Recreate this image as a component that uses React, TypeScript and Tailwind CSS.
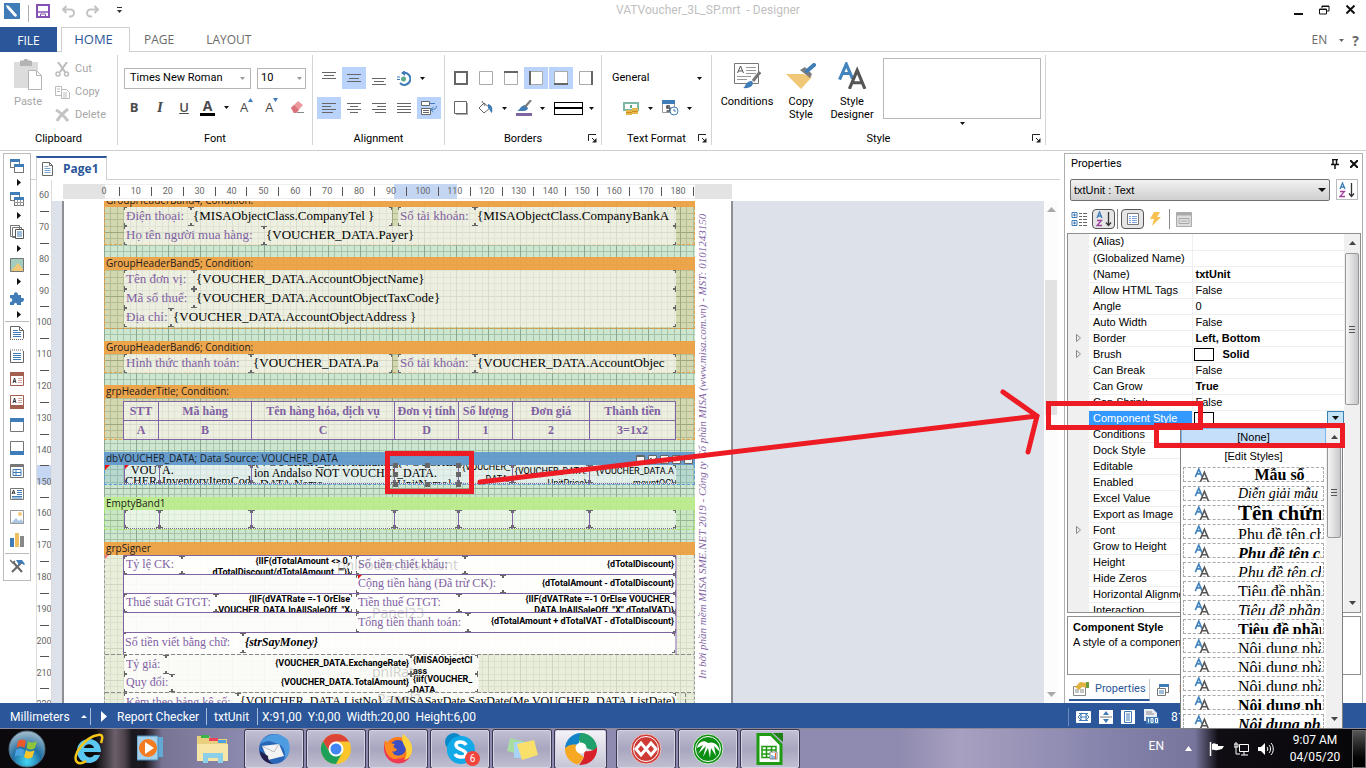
import type { ReactNode } from "react";

const UI = "font-['Roboto','Open_Sans',sans-serif]";

type Box = {
    x: number;
    y: number;
    w: number;
    h: number;
    lines?: string[];
    kind?: "label" | "note" | "value" | "cell" | "small" | "bold" | "signature" | "head";
    align?: "left" | "right" | "center";
    top?: boolean;
    edge?: boolean;
};

const kinds = {
    label: "text-[13px] leading-[14px] text-[#7f5fa3] font-['Liberation_Serif',serif]",
    note: "text-[12px] leading-[14px] text-[#7f5fa3] font-['Liberation_Serif',serif]",
    value: "text-[13px] leading-[13px] text-black font-['Liberation_Serif',serif]",
    cell: "text-[12px] leading-[11px] text-black font-['Liberation_Serif',serif]",
    small: "text-[9px] leading-[12px] text-black font-['Roboto','Liberation_Sans',sans-serif]",
    bold: "text-[9px] leading-[11px] font-bold text-black font-['Roboto','Liberation_Sans',sans-serif]",
    signature: "text-[12px] leading-[14px] font-bold italic text-black font-['Liberation_Serif',serif]",
    head: "text-[12px] leading-[14px] font-bold text-[#7f5fa3] font-['Liberation_Serif',serif]",
};

const aligns = {
    left: "items-start",
    right: "items-end",
    center: "items-center",
};

const band4: Box[] = [
    { x: 19, y: 0, w: 67, h: 19, lines: ["Điện thoại:"], kind: "label" },
    { x: 86, y: 0, w: 201, h: 19, lines: ["{MISAObjectClass.CompanyTel }"] },
    { x: 293, y: 0, w: 77, h: 19, lines: ["Số tài khoản:"], kind: "label" },
    { x: 370, y: 0, w: 201, h: 19, lines: ["{MISAObjectClass.CompanyBankA"] },
    { x: 19, y: 19, w: 140, h: 19, lines: ["Họ tên người mua hàng:"], kind: "label" },
    { x: 159, y: 19, w: 412, h: 19, lines: ["{VOUCHER_DATA.Payer}"] },
];

const band5: Box[] = [
    { x: 19, y: 0, w: 70, h: 19, lines: ["Tên đơn vị:"], kind: "label" },
    { x: 89, y: 0, w: 482, h: 19, lines: ["{VOUCHER_DATA.AccountObjectName}"] },
    { x: 19, y: 19, w: 70, h: 19, lines: ["Mã số thuế:"], kind: "label" },
    { x: 89, y: 19, w: 482, h: 19, lines: ["{VOUCHER_DATA.AccountObjectTaxCode}"] },
    { x: 19, y: 38, w: 47, h: 19, lines: ["Địa chỉ:"], kind: "label" },
    { x: 66, y: 38, w: 505, h: 19, lines: ["{VOUCHER_DATA.AccountObjectAddress }"] },
];

const band6: Box[] = [
    { x: 19, y: 0, w: 127, h: 19, lines: ["Hình thức thanh toán:"], kind: "label" },
    { x: 146, y: 0, w: 141, h: 19, lines: ["{VOUCHER_DATA.Pa"] },
    { x: 293, y: 0, w: 77, h: 19, lines: ["Số tài khoản:"], kind: "label" },
    { x: 370, y: 0, w: 201, h: 19, lines: ["{VOUCHER_DATA.AccountObjec"] },
];

const dataBand: Box[] = [
    { x: 19, y: 0, w: 35, h: 19, lines: ["VOU", "CHER"], kind: "cell", align: "right", top: true, edge: true },
    { x: 54, y: 0, w: 92, h: 19, lines: ["A.", "InventoryItemCode"], kind: "cell", top: true, edge: true },
    { x: 146, y: 0, w: 143, h: 19, lines: ["{VOUCHER_DATA.Enumerat", "ion Andalso NOT VOUCHER", "_DATA.Name"], kind: "cell", edge: true },
    { x: 289, y: 0, w: 64, h: 19, lines: ["{VOUCHER", "_DATA.", "UnitName}"], kind: "cell", edge: true },
    { x: 353, y: 0, w: 54, h: 19, lines: ["{VOUCHER_", "DATA."], kind: "small", align: "right", edge: true },
    { x: 407, y: 0, w: 77, h: 19, lines: ["{VOUCHER_DATA.", "UnitPrice}"], kind: "small", align: "right", top: true, edge: true },
    { x: 484, y: 0, w: 87, h: 19, lines: ["{VOUCHER_DATA.A", "mountOC}"], kind: "small", align: "right", top: true, edge: true },
];

const emptyBand: Box[] = [
    { x: 19, y: 0, w: 35, h: 19, edge: true },
    { x: 54, y: 0, w: 92, h: 19, edge: true },
    { x: 146, y: 0, w: 143, h: 19, edge: true },
    { x: 289, y: 0, w: 64, h: 19, edge: true },
    { x: 353, y: 0, w: 54, h: 19, edge: true },
    { x: 407, y: 0, w: 77, h: 19, edge: true },
    { x: 484, y: 0, w: 87, h: 19, edge: true },
];

const signer: Box[] = [
    { x: 19, y: 1, w: 58, h: 18, lines: ["Tỷ lệ CK:"], kind: "note" },
    { x: 77, y: 1, w: 170, h: 18, lines: ["{IIF(dTotalAmount <> 0,", "dTotalDiscount/dTotalAmount, \"\")}"], kind: "bold", align: "right", top: true },
    { x: 251, y: 1, w: 109, h: 18, lines: ["Số tiền chiết khấu:"], kind: "note" },
    { x: 360, y: 1, w: 211, h: 18, lines: ["{dTotalDiscount}"], kind: "bold", align: "right" },
    { x: 251, y: 20, w: 147, h: 18, lines: ["Cộng tiền hàng (Đã trừ CK):"], kind: "note" },
    { x: 398, y: 20, w: 173, h: 18, lines: ["{dTotalAmount - dTotalDiscount}"], kind: "bold", align: "right" },
    { x: 19, y: 39, w: 92, h: 18, lines: ["Thuế suất GTGT:"], kind: "note" },
    { x: 111, y: 39, w: 136, h: 18, lines: ["{IIF(dVATRate =-1 OrElse", "VOUCHER_DATA.InAllSaleOff, \"X"], kind: "bold", align: "right", top: true },
    { x: 251, y: 39, w: 103, h: 18, lines: ["Tiền thuế GTGT:"], kind: "note" },
    { x: 354, y: 39, w: 217, h: 18, lines: ["{IIF(dVATRate =-1 OrElse VOUCHER_", "DATA.InAllSaleOff, \"X\",dTotalVAT)}"], kind: "bold", align: "right", top: true },
    { x: 251, y: 58, w: 112, h: 19, lines: ["Tổng tiền thanh toán:"], kind: "note" },
    { x: 363, y: 58, w: 208, h: 19, lines: ["{dTotalAmount + dTotalVAT - dTotalDiscount}"], kind: "bold", align: "right" },
    { x: 18, y: 78, w: 120, h: 20, lines: ["Số tiền viết bằng chữ:"], kind: "note" },
    { x: 138, y: 78, w: 432, h: 20, lines: ["{strSayMoney}"], kind: "signature" },
    { x: 19, y: 100, w: 42, h: 19, lines: ["Tỷ giá:"], kind: "note" },
    { x: 61, y: 100, w: 245, h: 19, lines: ["{VOUCHER_DATA.ExchangeRate}"], kind: "bold", align: "right" },
    { x: 306, y: 100, w: 67, h: 19, lines: ["{MISAObjectCl", "ass"], kind: "bold", top: true },
    { x: 19, y: 119, w: 48, h: 18, lines: ["Quy đổi:"], kind: "note" },
    { x: 67, y: 119, w: 239, h: 18, lines: ["{VOUCHER_DATA.TotalAmount}"], kind: "bold", align: "right" },
    { x: 306, y: 119, w: 67, h: 18, lines: ["{iif(VOUCHER_", "DATA."], kind: "bold", top: true },
    { x: 19, y: 138, w: 114, h: 19, lines: ["Kèm theo bảng kê số:"], kind: "note" },
    { x: 133, y: 138, w: 438, h: 19, lines: ["{VOUCHER_DATA.ListNo}, {MISASayDate.SayDate(Me.VOUCHER_DATA.ListDate)}"], kind: "cell" },
];

const ghosts = [
    { x: 232, y: 2, text: "pnlFooterDiscount" },
    { x: 267, y: 50, text: "Panel23" },
    { x: 267, y: 109, text: "pnlRate" },
    { x: 272, y: 136, text: "Panel2" },
];

const props: { name: string; value?: string; bold?: boolean; swatch?: boolean; expand?: boolean }[] = [
    { name: "(Alias)" },
    { name: "(Globalized Name)" },
    { name: "(Name)", value: "txtUnit", bold: true },
    { name: "Allow HTML Tags", value: "False" },
    { name: "Angle", value: "0" },
    { name: "Auto Width", value: "False" },
    { name: "Border", value: "Left, Bottom", bold: true, expand: true },
    { name: "Brush", value: "Solid", bold: true, swatch: true, expand: true },
    { name: "Can Break", value: "False" },
    { name: "Can Grow", value: "True", bold: true },
    { name: "Can Shrink", value: "False" },
    { name: "Component Style", value: "", swatch: true },
    { name: "Conditions" },
    { name: "Dock Style" },
    { name: "Editable" },
    { name: "Enabled" },
    { name: "Excel Value" },
    { name: "Export as Image" },
    { name: "Font", expand: true },
    { name: "Grow to Height" },
    { name: "Height" },
    { name: "Hide Zeros" },
    { name: "Horizontal Alignment" },
    { name: "Interaction" },
];

const styleItems = [
    { text: "Mẫu số", cls: "text-[16px] leading-[14px] font-bold text-center" },
    { text: "Diễn giải mẫu số", cls: "text-[14px] leading-[14px] italic" },
    { text: "Tên chứng từ", cls: "text-[21px] leading-[14px] font-bold" },
    { text: "Phụ đề tên chứng", cls: "text-[16px] leading-[20px]" },
    { text: "Phụ đề tên ch", cls: "text-[16px] leading-[20px] font-bold italic" },
    { text: "Phụ đề tên chứng", cls: "text-[16px] leading-[20px] italic" },
    { text: "Tiêu đề phần", cls: "text-[16px] leading-[20px]" },
    { text: "Tiêu đề phần", cls: "text-[16px] leading-[20px] italic" },
    { text: "Tiêu đề phần", cls: "text-[16px] leading-[20px] font-bold" },
    { text: "Nội dung phần", cls: "text-[16px] leading-[20px]" },
    { text: "Nội dung phần", cls: "text-[16px] leading-[20px]" },
    { text: "Nội dung phần", cls: "text-[16px] leading-[20px]" },
    { text: "Nội dung phần", cls: "text-[16px] leading-[20px] font-bold" },
    { text: "Nội dung phần", cls: "text-[16px] leading-[20px] font-bold italic" },
];

function Svg({ w = 16, h = 16, box, children }: { w?: number; h?: number; box?: string; children: ReactNode }) {
    return (
        <svg width={w} height={h} viewBox={box ?? `0 0 ${w} ${h}`} fill="none" aria-hidden="true" className="shrink-0">
            {children}
        </svg>
    );
}

function Caret({ color = "#111" }: { color?: string }) {
    return (
        <Svg w={5} h={3}>
            <path d="M0 0h5L2.500 3z" fill={color} />
        </Svg>
    );
}

function IconButton({ label, on, children }: { label: string; on?: boolean; children: ReactNode }) {
    return (
        <button
            aria-label={label}
            className={`flex h-[22px] w-6 shrink-0 items-center justify-center ${on ? "bg-[#bad3fc]" : ""}`}
        >
            {children}
        </button>
    );
}

function TitleBar() {
    return (
        <header className="relative flex h-[27px] items-start px-1 pt-[3px]">
            <Svg>
                <rect width="16" height="16" fill="#3f7cb8" />
                <path d="M2 2l3 1 8 9-1 2-2-1L3 5z" fill="#fff" />
            </Svg>
            <div className="mt-0.5 ml-2 h-[17px] w-px bg-[#b0b0b0]" />
            <button aria-label="Save" className="mt-px ml-[7px]">
                <Svg w={14} h={14}>
                    <path d="M1 1h12v12H1z" stroke="#8451b5" strokeWidth="2" />
                    <path d="M1 8h12" stroke="#8451b5" strokeWidth="1.500" />
                    <path d="M4.500 13v-3h5v3" stroke="#8451b5" />
                </Svg>
            </button>
            <button aria-label="Undo" className="mt-0.5 ml-[12px]">
                <Svg w={13} h={13}>
                    <path d="M4.500 1L1 4.500 4.500 8M1 4.500h7.500a3.500 3.500 0 010 7H7" stroke="#c3c3c3" strokeWidth="2" />
                </Svg>
            </button>
            <button aria-label="Redo" className="mt-0.5 ml-[11px]">
                <Svg w={13} h={13}>
                    <path d="M8.500 1L12 4.500 8.500 8M12 4.500H4.500a3.500 3.500 0 000 7H6" stroke="#c3c3c3" strokeWidth="2" />
                </Svg>
            </button>
            <button aria-label="Customize toolbar" className="mt-1 ml-[18px]">
                <Svg w={5} h={7}>
                    <path d="M0 .5h5" stroke="#333" />
                    <path d="M0 3h5L2.500 6z" fill="#333" />
                </Svg>
            </button>
            <h1 className="flex-1 text-center text-[12px] leading-[15px] whitespace-pre text-[#bfbfbf]">
                {"VATVoucher_3L_SP.mrt  - Designer"}
            </h1>
            <div className="flex items-center gap-4 pt-px pr-[7px]">
                <button aria-label="Minimize" className="pt-[9px]">
                    <Svg w={9} h={2}><path d="M0 1h9" stroke="#111" strokeWidth="2" /></Svg>
                </button>
                <button aria-label="Restore">
                    <Svg w={11} h={10}>
                        <path d="M3 3V1h7v5H8M3 1.500h7" stroke="#111" />
                        <path d="M.5 4h7v5h-7zM.5 4.500h7" stroke="#111" />
                    </Svg>
                </button>
                <button aria-label="Close">
                    <Svg w={9} h={9}><path d="M.5.5l8 8M8.500.5l-8 8" stroke="#111" strokeWidth="2" /></Svg>
                </button>
            </div>
        </header>
    );
}

function TabBar() {
    return (
        <nav className="flex h-[25px] items-stretch font-['Open_Sans',sans-serif] text-[13px] text-[#6a6a6a]">
            <button className="w-[57px] bg-[#2b579a] pt-0.5 text-[12px] text-white">FILE</button>
            <div className="w-1 border-b border-[#cfcfcf]" />
            <button className="w-[69px] border-x border-t border-[#cfcfcf] pr-1 text-[#2b579a]">HOME</button>
            <div className="flex flex-1 items-center border-b border-[#cfcfcf] pt-0.5 pl-[14px]">
                <button className="text-[12px]">PAGE</button>
                <button className="ml-8 text-[12px]">LAYOUT</button>
                <span className="flex-1" />
                <button className="text-[12px]">EN</button>
                <button aria-label="Languages" className="ml-3"><Caret color="#666" /></button>
                <button aria-label="Help" className="mr-[7px] ml-2 text-[14px] font-bold">?</button>
            </div>
        </nav>
    );
}

function Group({ label, width, launcher, children }: { label: string; width: string; launcher?: boolean; children: ReactNode }) {
    return (
        <section className={`flex ${width} shrink-0 flex-col border-r border-[#d5d5d5]`}>
            <div className="flex-1">{children}</div>
            <div className="relative flex h-3 items-center justify-center text-black">
                {label}
                {launcher && (
                    <button aria-label={`${label} settings`} className="absolute top-px right-1">
                        <Svg w={9} h={9}>
                            <path d="M.5 7V.5H8M4 4l3 3" stroke="#222" />
                            <path d="M8.500 4v4.500H4z" fill="#222" />
                        </Svg>
                    </button>
                )}
            </div>
        </section>
    );
}

function Lines({ d }: { d: string }) {
    return (
        <Svg w={14} h={14}><path d={d} stroke="#666" /></Svg>
    );
}

function BorderIcon({ side }: { side?: "all" | "top" | "left" | "bottom" | "right" }) {
    const edge = {
        top: "M0 1h14",
        left: "M1 0v14",
        bottom: "M0 13h14",
        right: "M13 0v14",
        all: "M1 1h12v12H1z",
    };
    return (
        <Svg w={14} h={14}>
            <path d="M.5.5h13v13H.5z" stroke="#aaa" fill="#fff" />
            {side && <path d={edge[side]} stroke="#666" strokeWidth="2" />}
        </Svg>
    );
}

function StyleGlyph({ w, h }: { w: number; h: number }) {
    return (
        <Svg w={w} h={h} box="0 0 28 26">
            <path d="M1.500 17L8 2l6 14M4 11h8" stroke="#4484bd" strokeWidth="3" />
            <path d="M11 26l7.500-18L26 26M13.500 20h10" stroke="#555" strokeWidth="3" />
        </Svg>
    );
}

function Ribbon() {
    return (
        <div className="flex h-[99px] border-b border-[#cfcfcf] pt-[3px] pb-[5px] text-[11px]">
            <Group label="Clipboard" width="w-[118px]">
                <div className="flex text-[#a6a6a6]">
                    <button className="mt-1 ml-[14px] flex w-7 flex-col items-center">
                        <Svg w={28} h={31}>
                            <path d="M0 3h6V1h4V0h3v1h4v2h7v8H14v18H0z" fill="#dcdcdc" />
                            <path d="M6 2h3l2-2h2l2 2h3v5H6z" fill="#b4b4b4" />
                            <path d="M14.500 11.500h8l5 5v14h-13zM22.500 11.500v5h5" fill="#fff" stroke="#b4b4b4" />
                        </Svg>
                        <span className="mt-1">Paste</span>
                    </button>
                    <div className="ml-[13px] flex flex-col gap-px pt-[3px]">
                        <button className="flex h-[22px] items-center gap-[5px]">
                            <Svg w={15} h={15}>
                                <path d="M3 0l7 10M12 0L5 10" stroke="#bbb" strokeWidth="2" />
                                <circle cx="3" cy="12" r="2" stroke="#bbb" strokeWidth="1.500" />
                                <circle cx="11.500" cy="12" r="2" stroke="#bbb" strokeWidth="1.500" />
                            </Svg>
                            Cut
                        </button>
                        <button className="flex h-[22px] items-center gap-[5px]">
                            <Svg w={15} h={15}>
                                <path d="M.5 1.500h6v9h-6zM2 4h3M2 6.500h3" stroke="#bbb" />
                                <path d="M6.500 4.500h5l3 3v6h-8zM8 8h4M8 10h4M8 12h4" stroke="#bbb" fill="#fff" />
                            </Svg>
                            Copy
                        </button>
                        <button className="flex h-[22px] items-center gap-[5px]">
                            <Svg w={15} h={15}>
                                <path d="M1 2c4 2 8 6 12 11M13 1C8 5 4 9 2 13" stroke="#c4c4c4" strokeWidth="3" />
                            </Svg>
                            Delete
                        </button>
                    </div>
                </div>
            </Group>

            <Group label="Font" width="w-[195px]">
                <div className="mt-[13px] ml-1.5 flex gap-1.5 text-[11px] text-black">
                    <button className="flex h-[21px] w-[127px] items-center justify-between border border-[#b5b5b5] px-[5px]">
                        Times New Roman <Caret color="#999" />
                    </button>
                    <button className="flex h-[21px] w-[49px] items-center justify-between border border-[#b5b5b5] px-[3px]">
                        10 <Caret color="#999" />
                    </button>
                </div>
                <div className="mt-2 ml-1.5 flex h-5 items-center font-['Open_Sans',sans-serif] text-[14px] leading-[18px] text-[#4a4a4a]">
                    <button className="w-5 text-[13px] font-bold">B</button>
                    <button className="ml-1 w-6 font-['Liberation_Serif',serif] text-[15px] font-bold italic">I</button>
                    <button className="ml-0.5 w-5 text-[13px] font-semibold underline">U</button>
                    <button className="ml-[6px] h-[17px] w-[15px] border-b-[3px] border-black leading-[13px] font-bold">A</button>
                    <button aria-label="Font color" className="ml-[9px]"><Caret /></button>
                    <button aria-label="Grow font" className="ml-[11px] flex text-[13px]">
                        A<Svg w={5} h={4}><path d="M0 4l2.500-4L5 4z" fill="#3f7cb8" /></Svg>
                    </button>
                    <button aria-label="Shrink font" className="ml-3 flex text-[13px]">
                        A<Svg w={5} h={4}><path d="M0 0h5L2.500 4z" fill="#3f7cb8" /></Svg>
                    </button>
                    <button aria-label="Clear formatting" className="ml-3">
                        <Svg w={15} h={14}>
                            <path d="M1 8l7-7 5 4-7 8H4z" fill="#ec9aa0" />
                            <path d="M1 8l3-3 5 5-3 3H4z" fill="#d9727b" />
                            <path d="M7 12.500h7" stroke="#888" />
                        </Svg>
                    </button>
                </div>
            </Group>

            <Group label="Alignment" width="w-[132px]">
                <div className="mt-3 ml-1 flex gap-px">
                    <IconButton label="Top"><Lines d="M0 1.500h14M2 4.500h10M0 7.500h14" /></IconButton>
                    <IconButton label="Middle" on><Lines d="M0 3.500h14M2 7.500h10M0 10.500h14" /></IconButton>
                    <IconButton label="Bottom"><Lines d="M0 7.500h14M2 10.500h10M0 13.500h14" /></IconButton>
                    <IconButton label="Angle">
                        <Svg w={14} h={15}>
                            <path d="M6 2a6 6 0 11-3 10" stroke="#3f7cb8" strokeWidth="2" />
                            <path d="M8-1v6L4 2z" fill="#3f7cb8" />
                            <circle cx="6.500" cy="8" r="2.500" fill="#5fa98b" />
                            <path d="M0 6h3M0 8.500h3" stroke="#3f7cb8" />
                        </Svg>
                    </IconButton>
                    <button aria-label="Angle options" className="ml-[3px]"><Caret /></button>
                </div>
                <div className="mt-2 ml-1 flex gap-px">
                    <IconButton label="Left" on><Lines d="M0 2.500h14M0 5.500h9M0 8.500h14M0 11.500h11" /></IconButton>
                    <IconButton label="Center"><Lines d="M0 2.500h14M3 5.500h8M0 8.500h14M3 11.500h8" /></IconButton>
                    <IconButton label="Right"><Lines d="M0 2.500h14M5 5.500h9M0 8.500h14M3 11.500h11" /></IconButton>
                    <IconButton label="Justify"><Lines d="M0 2.500h14M0 5.500h14M0 8.500h14M0 11.500h14" /></IconButton>
                    <IconButton label="Wrap" on>
                        <Svg>
                            <path d="M.5 1.500h8v4h-8zM.5 8.500h9v6h-9zM2 10.500h6M2 12.500h6" stroke="#666" fill="#fff" />
                            <path d="M9 3.500h5M15.500 6c0 3-2 3.500-5 3.500M12.500 7l-3 2.500 3 2.500" stroke="#3f7cb8" />
                        </Svg>
                    </IconButton>
                </div>
            </Group>

            <Group label="Borders" width="w-[157px]" launcher>
                <div className="mt-3 ml-1 flex gap-px">
                    <IconButton label="All borders"><BorderIcon side="all" /></IconButton>
                    <IconButton label="No border"><BorderIcon /></IconButton>
                    <IconButton label="Top border"><BorderIcon side="top" /></IconButton>
                    <IconButton label="Left border" on><BorderIcon side="left" /></IconButton>
                    <IconButton label="Bottom border" on><BorderIcon side="bottom" /></IconButton>
                    <IconButton label="Right border"><BorderIcon side="right" /></IconButton>
                </div>
                <div className="mt-2 ml-1 flex h-[22px] items-center">
                    <IconButton label="Shadow">
                        <Svg w={14} h={14}>
                            <path d="M2 13h11V2" stroke="#aaa" strokeWidth="2" />
                            <path d="M.5.5h12v12H.5z" stroke="#666" fill="#fff" />
                        </Svg>
                    </IconButton>
                    <IconButton label="Fill">
                        <Svg w={15} h={14}>
                            <path d="M6 2l6 5-6 5-5-5zM4 0l3 5" stroke="#666" fill="#fff" />
                            <path d="M10 3c4 1 5 4 4 9-2-1-2-4-4-5z" fill="#3f7cb8" />
                        </Svg>
                    </IconButton>
                    <button aria-label="Fill color"><span className="block pl-[5px]"><Caret /></span></button>
                    <span className="ml-[9px]">
                        <Svg w={16} h={16}>
                            <path d="M1 11c3-1 3-5 8-6l3 3c-1 4-6 3-11 3z" fill="#3f7cb8" />
                            <path d="M15 0l-6 7" stroke="#777" strokeWidth="2" />
                            <path d="M0 14.500h16" stroke="#8064a2" strokeWidth="3" />
                        </Svg>
                    </span>
                    <button aria-label="Border color" className="ml-2"><Caret /></button>
                    <button aria-label="Border style" className="ml-[9px] flex h-[13px] w-[29px] items-center border border-black">
                        <span className="h-0.5 w-full bg-black" />
                    </button>
                    <button aria-label="Border styles" className="ml-1.5"><Caret /></button>
                </div>
            </Group>

            <Group label="Text Format" width="w-[110px]" launcher>
                <button className="mt-3 flex h-[22px] w-full items-center justify-between pr-[9px] pl-[10px] text-black">
                    General <Caret />
                </button>
                <div className="mt-2 ml-[21px] flex h-[22px] items-center">
                    <Svg w={17} h={15}>
                        <path d="M1 2h14v7H1z" stroke="#7fb8a2" strokeWidth="2" fill="#fff" />
                        <path d="M8 4v3" stroke="#5fa98b" strokeWidth="2" />
                        <path d="M3 9h6v5H3zM9 7h6v6H9z" fill="#e9b64c" />
                        <path d="M3 11.500h6M9 10.500h6" stroke="#c58e20" />
                    </Svg>
                    <button aria-label="Currency" className="ml-[8px]"><Caret /></button>
                    <span className="ml-[9px]">
                        <Svg w={17} h={16}>
                            <path d="M.5.5h12v12H.5z" stroke="#999" />
                            <path d="M0 2h13" stroke="#3f7cb8" strokeWidth="4" />
                            <path d="M8 6H5v2h3v3H4.500" stroke="#444" strokeWidth="1.500" />
                            <circle cx="12" cy="11" r="4" fill="#fff" stroke="#3f7cb8" />
                            <path d="M12 9v2h2" stroke="#3f7cb8" />
                        </Svg>
                    </span>
                    <button aria-label="Date" className="ml-[8px]"><Caret /></button>
                </div>
            </Group>

            <Group label="Style" width="w-[334px]" launcher>
                <div className="flex text-black">
                    <button className="ml-2 flex w-[54px] flex-col items-center pt-2 leading-[13px]">
                        <Svg w={28} h={26}>
                            <path d="M1.500.5h24v20h-24z" stroke="#777" fill="#fff" />
                            <path d="M4.500 10L7.500 3l3 7M5.500 8h4" stroke="#555" />
                            <path d="M13 4.500h10M13 7.500h10M13 10.500h10M4 13.500h14M4 16.500h10" stroke="#999" />
                            <path d="M27 9l-7 9" stroke="#777" strokeWidth="3" />
                            <path d="M10 25c3-1 2-7 9-7 3 4-2 8-9 7z" fill="#3f7cb8" />
                        </Svg>
                        <span className="mt-[6px]">Conditions</span>
                    </button>
                    <button className="ml-1 flex w-[46px] flex-col items-center pt-2 leading-[13px]">
                        <Svg w={30} h={26}>
                            <path d="M0 11h17l9 3-11 12z" fill="#f0c878" />
                            <path d="M14 7l5-3 7 7-2 4z" fill="#7d7d7d" />
                            <path d="M21 8l7-6" stroke="#3f7cb8" strokeWidth="4" strokeLinecap="round" />
                        </Svg>
                        <span className="mt-[6px]">Copy Style</span>
                    </button>
                    <button className="ml-1 flex w-[48px] flex-col items-center pt-[7px] leading-[13px]">
                        <StyleGlyph w={29} h={27} />
                        <span className="mt-[6px]">Style Designer</span>
                    </button>
                    <div className="ml-[7px] flex flex-col items-center gap-[3px] pt-[3px]">
                        <div className="h-[61px] w-[158px] border border-[#b8b8b8]" />
                        <button aria-label="More styles" className="flex"><Caret /></button>
                    </div>
                </div>
            </Group>
        </div>
    );
}

const toolArrow = (
    <Svg w={4} h={7}><path d="M0 0l4 3.500L0 7z" fill="#111" /></Svg>
);

function Window({ x, y }: { x: number; y: number }) {
    return (
        <>
            <rect x={x + 0.5} y={y + 0.5} width="9" height="8" fill="#fff" stroke="#777" />
            <rect x={x} y={y} width="10" height="3" fill="#3f7cb8" />
        </>
    );
}

const tools: { label: string; more?: boolean; art: ReactNode }[] = [
    { label: "Bands", more: true, art: <><Window x={0} y={0} /><Window x={4} y={5} /></> },
    { label: "Cross bands", more: true, art: <><Window x={0} y={0} /><Window x={4} y={5} /><path d="M4 10.500h10M7.500 8v6M10.500 8v6" stroke="#999" /></> },
    { label: "Components", more: true, art: <><path d="M.5.5h9v11h-9zM2.500 2.500h9v10h-9z" fill="#fff" stroke="#777" /><path d="M5.500 4.500h8v9h-8z" fill="#fff" stroke="#555" /><path d="M7 7h5M7 9h5M7 11h5" stroke="#3f7cb8" /></> },
    { label: "Images", more: true, art: <><path d="M.5.5h13v13H.5z" fill="#a5cdbd" stroke="#777" /><path d="M1 13l7-8 5 6v2z" fill="#f0c878" /></> },
    { label: "Plug-ins", more: true, art: <path d="M0 4h4c-1-3 4-4 4 0h3v3c4-1 4 4 0 4v3H7c0-3-3-3-3 0H0v-3c3 0 3-4 0-4z" fill="#3f7cb8" /> },
    { label: "Report title", art: <><path d="M.5.500h9l4 4v8M.5.5v12M9.500.5v4h4" stroke="#666" /><path d="M3 4.500h5M3 6.500h8M3 8.500h8M3 10.500h8" stroke="#3f7cb8" /><path d="M0 13.500h14" stroke="#666" strokeDasharray="1 1" /></> },
    { label: "Report summary", art: <><path d="M.5 2v11.500h13V2" stroke="#666" /><path d="M0 1h14" stroke="#666" strokeDasharray="1 1" /><path d="M3 4.500h8M3 6.500h8M3 8.500h8M3 10.500h8" stroke="#3f7cb8" /></> },
    { label: "Page header", art: <><path d="M.5.5h13v13H.5z" fill="#fff" stroke="#a3604f" /><path d="M0 2h14" stroke="#a3604f" strokeWidth="4" /><path d="M3 11l1.500-5L6 11M3.500 9.500h2" stroke="#333" /><path d="M8 6.500h4M8 8.500h4M8 10.500h4" stroke="#cfa79d" /></> },
    { label: "Page footer", art: <><path d="M.5.5h13v13H.5z" fill="#fff" stroke="#a3604f" /><path d="M0 12h14" stroke="#a3604f" strokeWidth="4" /><path d="M3 8l1.500-5L6 8M3.500 6.500h2" stroke="#333" /><path d="M8 3.500h4M8 5.500h4M8 7.500h4" stroke="#cfa79d" /></> },
    { label: "Group header", art: <><path d="M.5.5h13v13H.5z" fill="#fff" stroke="#777" /><path d="M0 2h14" stroke="#3f7cb8" strokeWidth="4" /></> },
    { label: "Group footer", art: <><path d="M.5.5h13v13H.5z" fill="#fff" stroke="#777" /><path d="M0 12h14" stroke="#3f7cb8" strokeWidth="4" /></> },
    { label: "Data band", art: <><path d="M.5.5h13v13H.5z" stroke="#777" /><path d="M0 2h14" stroke="#777" strokeWidth="2" /><path d="M3 5.500h8v6H3zM3 8.500h8M6 6v6" stroke="#3f7cb8" /></> },
    { label: "Text", art: <><path d="M.5 1.500h13v11H.5z" stroke="#777" /><path d="M2 7l1.500-4L5 7M2.500 6h2" stroke="#333" /><path d="M7 3.500h5M7 5.500h5M7 7.500h5M2 9.500h10M2 11h10" stroke="#3f7cb8" /></> },
    { label: "Image", art: <><path d="M.5.5h13v13H.5z" stroke="#999" /><path d="M1 13l5-5 3 3 2-2 2 3v1z" fill="#a9c6e4" /><circle cx="10" cy="4" r="2" fill="#f0c878" /></> },
    { label: "Chart", art: <><path d="M0 5h4v9H0z" fill="#3f7cb8" /><path d="M5 0h4v14H5z" fill="#f0c060" /><path d="M10 3h4v11h-4z" fill="#888" /></> },
];

function Toolbox() {
    return (
        <aside className="mt-[2px] ml-[3px] flex h-[428px] w-7 flex-col items-center border border-[#bcbcbc] pt-[5px]">
            {tools.map((t) => (
                <div key={t.label} className="flex flex-col items-center">
                    <button aria-label={t.label} className={`flex items-start ${t.more ? "h-[14px]" : "h-[23px]"}`}>
                        <Svg w={14} h={14}>{t.art}</Svg>
                    </button>
                    {t.more && <span className="flex h-[19px] items-center pl-1">{toolArrow}</span>}
                    {t.label === "Plug-ins" && <span className="-mt-[3px] mb-1 h-px w-6 bg-[#bcbcbc]" />}
                </div>
            ))}
            <span className="-mt-[3px] mb-[5px] h-px w-6 shrink-0 bg-[#bcbcbc]" />
            <button aria-label="Toolbox settings">
                <Svg w={15} h={14}>
                    <path d="M2 13L12 3M3 3l9 10" stroke="#666" strokeWidth="2" />
                    <path d="M6 1h6l3 4-1 1-3-2-2 2z" fill="#3f7cb8" />
                    <path d="M0 1l3 3 2-2" stroke="#666" strokeWidth="1.500" />
                </Svg>
            </button>
        </aside>
    );
}

function Corners() {
    return (
        <>
            <span className="absolute top-0 left-0 size-[3px] border-t border-l border-[#666]" />
            <span className="absolute top-0 right-0 size-[3px] border-t border-r border-[#666]" />
            <span className="absolute bottom-0 left-0 size-[3px] border-b border-l border-[#666]" />
            <span className="absolute right-0 bottom-0 size-[3px] border-r border-b border-[#666]" />
        </>
    );
}

function Component({ box }: { box: Box }) {
    return (
        <div
            className={`absolute flex flex-col overflow-hidden bg-white/60 px-[2px] whitespace-pre ${box.top ? "" : "justify-center pb-[2px]"} ${aligns[box.align ?? "left"]} ${kinds[box.kind ?? "value"]} ${box.edge ? "border-b border-l border-[#8064a2] [border-bottom-style:dotted]" : ""}`}
            style={{ left: box.x, top: box.y, width: box.w, height: box.h }}
        >
            {box.lines?.map((l) => <span key={l} className="shrink-0">{l}</span>)}
            <Corners />
        </div>
    );
}

const bandTints = {
    orange: { head: "bg-[#eea145]/95", body: "bg-[#e9a03c]/20 border-[#e5a04a]" },
    blue: { head: "bg-[#6199cc]/95", body: "bg-[#5fa0cc]/20 border-[#5b9bd5]" },
    green: { head: "bg-[#bceb8d]/95", body: "bg-[#b7e986]/20 border-[#a5e070]" },
    plain: { head: "bg-[#eea145]/95", body: "bg-[#fbf3e3]/60 border-[#999]" },
};

function Band({ title, tint, height, children }: { title: string; tint: keyof typeof bandTints; height: string; children: ReactNode }) {
    return (
        <section className="relative mb-3">
            <h2 className={`h-[13px] pl-0.5 font-['Open_Sans',sans-serif] text-[10px] leading-[12px] whitespace-pre text-[#1c1c1c] ${bandTints[tint].head}`}>{title}</h2>
            <div className={`relative flow-root border-x border-b border-dashed ${height} ${bandTints[tint].body}`}>{children}</div>
        </section>
    );
}

const columns = ["w-[35px]", "w-[93px]", "w-[143px]", "w-[64px]", "w-[54px]", "w-[77px]", "w-[86px]"];

function Report() {
    return (
        <div className="relative ml-10 w-[591px] shrink-0 bg-[#cde6cf]">
            <svg className="absolute inset-0 h-full w-full" aria-hidden="true">
                <defs>
                    <pattern id="grid" width="32" height="32" patternUnits="userSpaceOnUse">
                        <path d="M6.500 0v32M13.500 0v32M19.500 0v32M26.500 0v32M0 5.500h32M0 12.500h32M0 18.500h32M0 25.500h32" stroke="#a7c3aa" />
                        <path d="M.5 0v32M0 31.500h32" stroke="#8aa990" />
                    </pattern>
                </defs>
                <rect width="100%" height="100%" fill="url(#grid)" />
            </svg>
            <div className="-mt-[7px]">
                <Band title="GroupHeaderBand4; Condition:" tint="orange" height="h-[38px]">
                    {band4.map((b) => <Component key={b.x + "-" + b.y} box={b} />)}
                </Band>
                <Band title="GroupHeaderBand5; Condition:" tint="orange" height="h-[59px]">
                    {band5.map((b) => <Component key={b.x + "-" + b.y} box={b} />)}
                </Band>
                <Band title="GroupHeaderBand6; Condition:" tint="orange" height="h-[19px]">
                    {band6.map((b) => <Component key={b.x + "-" + b.y} box={b} />)}
                </Band>
                <Band title="grpHeaderTitle; Condition:" tint="orange" height="h-[42px]">
                    <table className={`mt-[3px] ml-[18px] table-fixed border-collapse bg-white/60 text-center ${kinds.head}`}>
                        <thead>
                            <tr className="h-[19px]">
                                {["STT", "Mã hàng", "Tên hàng hóa, dịch vụ", "Đơn vị tính", "Số lượng", "Đơn giá", "Thành tiền"].map((c, i) => (
                                    <th key={c} className={`${columns[i]} border border-[#8064a2] p-0 whitespace-nowrap`}>{c}</th>
                                ))}
                            </tr>
                        </thead>
                        <tbody>
                            <tr className="h-[19px]">
                                {["A", "B", "C", "D", "1", "2", "3=1x2"].map((c) => (
                                    <td key={c} className="border border-[#8064a2] p-0">{c}</td>
                                ))}
                            </tr>
                        </tbody>
                    </table>
                </Band>
                <Band title="dbVOUCHER_DATA; Data Source: VOUCHER_DATA" tint="blue" height="h-5">
                    {dataBand.map((b) => <Component key={b.x} box={b} />)}
                    <svg className="absolute -top-3 left-0 h-9 w-full overflow-visible" aria-hidden="true">
                        <path d="M0 12h5l-5 5zM20 12h4l-4 4z" fill="#e11" />
                        <g fill="#f3f3f3" stroke="#666">
                            <path d="M531.500 2.500h8v8h-8zM543.500 2.500h8v8h-8zM555.500 2.500h8v8h-8zM567.500 2.500h8v8h-8zM579.500 2.500h8v8h-8z" />
                            <path d="M531 3.500h9M543 8l3-3 2 3 3-3M557 5l4 4M561 5l-4 4M569 6.500h5M581 6.500h5" fill="none" />
                        </g>
                        <g fill="#666">
                            <path d="M288 10h5v5h-5zM320 10h5v5h-5zM351 10h5v5h-5zM288 19h5v5h-5zM351 19h5v5h-5zM288 29h5v5h-5zM320 29h5v5h-5zM351 29h5v5h-5z" />
                        </g>
                    </svg>
                </Band>
                <Band title="EmptyBand1" tint="green" height="h-5">
                    {emptyBand.map((b) => <Component key={b.x} box={b} />)}
                </Band>
                <Band title="grpSigner" tint="plain" height="h-[170px]">
                    <svg className="absolute inset-0 h-full w-full" aria-hidden="true">
                        <path d="M19 0h553v99H19z" fill="#fff" fillOpacity=".85" />
                        <path d="M19 99h355v38H19zM19 138h553v40H19z" fill="#fff" fillOpacity=".5" />
                    </svg>
                    {signer.map((b) => <Component key={b.x + "-" + b.y} box={b} />)}
                    <svg className="absolute inset-0 h-full w-full" aria-hidden="true">
                        <path d="M18.500 99V.5h552.500V99M18 19.500h553M18 38.500h553M18 57.500h553M18 77.500h553" stroke="#8064a2" fill="none" />
                        <path d="M0 99.500h590M0 137.500h590M580.500 138v40" stroke="#8a8a8a" strokeDasharray="4 2" fill="none" />
                        <path d="M0 0h4l-4 4z" fill="#f77" />
                        <path d="M253 20h4l-4 4z" fill="#e11" />
                    </svg>
                    {ghosts.map((g) => (
                        <span key={g.text} className="absolute font-['Open_Sans',sans-serif] text-[14px] leading-[16px] text-[#888]/40" style={{ left: g.x, top: g.y }}>{g.text}</span>
                    ))}
                </Band>
            </div>
        </div>
    );
}

const topMarks = Array.from({ length: 19 }, (_, i) => i * 10);
const sideMarks = Array.from({ length: 17 }, (_, i) => 60 + i * 10);

function Document() {
    return (
        <main className="flex min-w-0 flex-1 flex-col">
            <div className="flex h-[29px] border-b border-[#d0d0d0] pt-[5px] pl-[5px]">
                <button className="-mb-px flex w-[71px] items-center gap-[10px] border-x border-t-2 border-[#d0d0d0] border-t-[#2b579a] bg-white pl-[5px] font-['Open_Sans',sans-serif] text-[12px] font-bold text-[#2b579a]">
                    <Svg w={11} h={14}>
                        <path d="M.5.5h7l3 3v10H.5zM7.500.5v3h3" stroke="#666" />
                        <path d="M2.500 4.500h4M2.500 6.500h6M2.500 8.500h6M2.500 10.500h6" stroke="#7ba3d0" />
                    </Svg>
                    Page1
                </button>
            </div>
            <div className="flex min-h-0 flex-1">
                <div className="ml-[5px] flex w-4 shrink-0 flex-col overflow-hidden border-x border-[#ddd] text-[9px] text-[#666]">
                    <div className="relative flex h-[541px] shrink-0 flex-col">
                        <span className="absolute top-[285px] h-[19px] w-full bg-[#c4d6f2]" />
                        {sideMarks.map((m) => (
                            <div key={m} className="relative flex flex-1 flex-col items-center justify-center">
                                {m}
                                <span className="absolute bottom-0 h-px w-[9px] bg-[#555]" />
                            </div>
                        ))}
                    </div>
                </div>
                <div className="flex min-w-0 flex-1 flex-col overflow-hidden">
                    <div className="relative mt-1 mb-[2px] ml-[11px] flex h-[15px] w-[669px] shrink-0 bg-[#e3e3e3] text-[9px] text-[#666]">
                        <span className="absolute left-[42px] h-full w-[590px] border-y border-[#eee] bg-white" />
                        <span className="absolute left-[331px] h-full w-[63px] bg-[#c4d6f2]" />
                        <div className="relative ml-[25px] flex w-[606px]">
                            {topMarks.map((m) => (
                                <div key={m} className="relative flex flex-1 items-center justify-center">
                                    {m}
                                    <span className="absolute right-0 h-[9px] w-px bg-[#555]" />
                                </div>
                            ))}
                        </div>
                    </div>
                    <div className="flex min-h-0 flex-1 overflow-hidden">
                        <div className="flex min-w-0 flex-1 overflow-hidden bg-[#dce1ea] pl-[10px]">
                            <div className="flex w-[671px] shrink-0 overflow-hidden border-r-2 border-l-2 border-[#8d8f94] bg-white">
                                <Report />
                                <p className="ml-px h-[478px] rotate-180 text-left font-['Liberation_Serif',serif] text-[11px] leading-[13px] whitespace-nowrap text-[#7f5fa3] italic [writing-mode:vertical-rl]">
                                    In bởi phần mềm MISA SME.NET 2019 - Công ty Cổ phần MISA (www.misa.com.vn) - MST: 0101243150
                                </p>
                            </div>
                        </div>
                        <div className="flex w-[14px] shrink-0 flex-col items-center bg-[#fcfcfc] py-1.5">
                            <Svg w={9} h={5}><path d="M0 5l4.500-5L9 5z" fill="#aaa" /></Svg>
                            <span className="mt-[68px] h-[135px] w-3 bg-[#e2e2e2]" />
                            <span className="flex-1" />
                            <Svg w={9} h={5}><path d="M0 0h9L4.500 5z" fill="#aaa" /></Svg>
                        </div>
                        <span className="w-[2px] shrink-0" />
                    </div>
                </div>
            </div>
        </main>
    );
}

function SortIcon() {
    return (
        <Svg w={16} h={16}>
            <path d="M1 7l2.500-6L6 7M2 5h3" stroke="#3f7cb8" strokeWidth="1.300" />
            <path d="M1 9.500h4.500l-4.500 5H6" stroke="#a0429c" strokeWidth="1.300" />
            <path d="M12.500 1v13M10 11.500l2.500 3 2.500-3" stroke="#333" strokeWidth="1.300" />
        </Svg>
    );
}

function Scrollbar({ thumb, gap = "mt-2" }: { thumb: string; gap?: string }) {
    return (
        <div className="flex w-4 shrink-0 flex-col items-center bg-[#f0f0f0] py-[7px]">
            <Svg w={7} h={4}><path d="M0 4l3.500-4L7 4z" fill="#444" /></Svg>
            <div className={`${gap} ${thumb} flex w-[14px] flex-col items-center justify-center gap-[2px] rounded-xs border border-[#979797] bg-gradient-to-r from-[#f5f5f5] to-[#c8c8cc]`}>
                <span className="h-px w-1.5 bg-[#555]" />
                <span className="h-px w-1.5 bg-[#555]" />
                <span className="h-px w-1.5 bg-[#555]" />
            </div>
            <span className="flex-1" />
            <Svg w={7} h={4}><path d="M0 0h7L3.500 4z" fill="#444" /></Svg>
        </div>
    );
}

function StyleMenu() {
    return (
        <div className="absolute top-[273px] left-[115px] z-20 flex h-[302px] w-[163px] border border-[#808080] bg-white text-black">
            <ul className="flex min-w-0 flex-1 flex-col overflow-hidden">
                <li className="flex h-[19px] shrink-0 items-center justify-center border border-[#7ab5ee] bg-[#c5dffb] font-['Liberation_Sans',sans-serif] text-[11px]">
                    [None]
                </li>
                <li className="flex h-[18px] shrink-0 items-center justify-center font-['Liberation_Sans',sans-serif] text-[11px]">[Edit Styles]</li>
                {styleItems.map((s, i) => (
                    <li key={i} className="mx-0.5 my-[2px] flex h-[15px] shrink-0 items-start border border-dashed border-[#a9a9a9]">
                        <span className="ml-[10px]"><StyleGlyph w={16} h={14} /></span>
                        <span className={`mr-0.5 ml-7 h-[14px] min-w-0 flex-1 overflow-hidden font-['Liberation_Serif',serif] whitespace-nowrap ${s.cls}`}>{s.text}</span>
                    </li>
                ))}
            </ul>
            <Scrollbar thumb="h-[92px]" gap="mt-[7px]" />
        </div>
    );
}

function PropertiesPanel() {
    return (
        <aside className="relative mt-[2px] mr-[3px] ml-1 flex w-[299px] shrink-0 flex-col border-t border-r border-l border-[#b0b0b0] font-['Liberation_Sans',sans-serif] text-[11px] text-black">
            <div className="flex h-5 items-center pr-1 pl-1.5">
                <h2 className={`flex-1 ${UI} text-[11px]`}>Properties</h2>
                <button aria-label="Pin">
                    <Svg w={8} h={10}><path d="M1 .5h6M2 0v5M5.500 0v5M0 5.500h8M4 6v4" stroke="#111" strokeWidth="1.500" /></Svg>
                </button>
                <button aria-label="Close panel" className="ml-[11px]">
                    <Svg w={8} h={8}><path d="M0 0l8 8M8 0L0 8" stroke="#111" strokeWidth="2" /></Svg>
                </button>
            </div>
            <div className="mt-[5px] ml-[5px] flex gap-1.5">
                <button className="flex h-[22px] w-[260px] items-center justify-between rounded-xs border border-[#707070] bg-gradient-to-b from-[#f2f2f2] to-[#cfcfcf] px-[3px]">
                    txtUnit : Text
                    <Svg w={8} h={4}><path d="M0 0h8L4 4z" fill="#111" /></Svg>
                </button>
                <button aria-label="Sort" className="flex h-[21px] w-[22px] items-center justify-center border border-[#bbb]"><SortIcon /></button>
            </div>
            <div className="mt-1 ml-[6px] flex h-7 items-center">
                <button aria-label="Categorized">
                    <Svg w={17} h={16}>
                        <path d="M1 1.500h5v5H1zM1 9.500h5v5H1zM2 4h3M3.500 2.500v3M2 12h3M3.500 10.500v3" stroke="#3f7cb8" />
                        <path d="M8 2.500h3M12 2.500h4M8 5.500h3M12 5.500h4M8 8.500h3M12 8.500h4M8 11.500h3M12 11.500h4M8 14.500h3M12 14.500h4" stroke="#666" />
                    </Svg>
                </button>
                <button aria-label="Alphabetical" className="ml-1 flex h-5 w-[23px] items-center justify-center rounded border border-[#555] bg-[#e6e6e6]"><SortIcon /></button>
                <span className="ml-0.5 h-5 w-px bg-[#888]" />
                <button aria-label="Property list" className="ml-[3px] flex h-5 w-[23px] items-center justify-center rounded border border-[#555] bg-[#e6e6e6]">
                    <Svg w={12} h={12}>
                        <path d="M.5.5h11v11H.5z" fill="#fff" stroke="#777" />
                        <path d="M2 3.500h2M5 3.500h5M2 5.500h2M5 5.500h5M2 7.500h2M5 7.500h5M2 9.500h2M5 9.500h5" stroke="#7da7d8" />
                    </Svg>
                </button>
                <button aria-label="Events" className="ml-1.5">
                    <Svg w={11} h={14}><path d="M4 0h6L7 5h4L2 14l2-7H0z" fill="#f9c052" /></Svg>
                </button>
                <span className="ml-[8px] h-5 w-px bg-[#888]" />
                <button aria-label="Property pages" className="ml-1.5">
                    <Svg w={16} h={15}>
                        <path d="M.5.5h15v14H.5z" fill="#ddd" stroke="#aaa" />
                        <path d="M0 2h16" stroke="#aaa" strokeWidth="3" />
                        <path d="M3 6.500h10v5H3zM5 9h6" stroke="#aaa" />
                    </Svg>
                </button>
            </div>
            <div className="ml-[2px] flex h-[380px] w-[294px] overflow-hidden border border-[#8e8f8f]">
                <table className="h-96 flex-1 table-fixed border-collapse">
                    <tbody>
                        {props.map((p) => {
                            const active = p.name === "Component Style";
                            return (
                                <tr key={p.name} className="h-4">
                                    <td className="w-[21px] bg-[#f0f0f0] p-0">
                                        {p.expand && (
                                            <span className="flex justify-center">
                                                <Svg w={5} h={8}><path d="M.5.5l4 3.500-4 3.500z" stroke="#888" /></Svg>
                                            </span>
                                        )}
                                    </td>
                                    <th className={`w-[103px] max-w-[103px] border-r border-b border-[#efefef] p-0 pl-1 text-left leading-[15px] font-normal whitespace-nowrap ${active ? "bg-[#3399ff] text-white" : ""}`}>
                                        {p.name}
                                    </th>
                                    <td className="border-b border-[#efefef] p-0">
                                        <span className={`flex h-[15px] items-center leading-[15px] ${p.bold ? "font-bold" : ""} ${p.swatch ? "pl-px" : "pl-[3px]"}`}>
                                            {p.swatch && <span className="mr-[9px] h-[13px] w-5 border border-black bg-white" />}
                                            {p.value}
                                            {active && (
                                                <button aria-label="Open styles" className="ml-auto flex h-[15px] w-[17px] items-center justify-center border border-[#3c7fb1] bg-[#c5e4f7]">
                                                    <Svg w={7} h={4}><path d="M0 0h7L3.500 4z" fill="#111" /></Svg>
                                                </button>
                                            )}
                                        </span>
                                    </td>
                                </tr>
                            );
                        })}
                    </tbody>
                </table>
                <Scrollbar thumb="h-[152px]" />
            </div>
            <div className="mt-[3px] ml-[2px] h-[59px] w-[294px] overflow-hidden border border-[#8e8f8f] px-[5px] pt-[3px] leading-[15px] whitespace-nowrap">
                <p className="font-bold">Component Style</p>
                <p>A style of a component.</p>
            </div>
            <div className={`mt-1 ml-1 flex h-[22px] text-[#2b579a] ${UI}`}>
                <button className="flex w-[81px] items-center gap-1.5 border-r border-b-2 border-[#ccc] border-b-[#2b579a] pl-1">
                    <Svg w={16} h={14}>
                        <path d="M.5 4.500h12v9H.5zM2 8h4M2 10h4M7 8h4M7 10h4" stroke="#888" />
                        <path d="M2 5l5-5 8 1v5l-6-1-3 3z" fill="#e3b341" />
                        <path d="M13 0h3v6h-3z" fill="#6a9e3f" />
                    </Svg>
                    Properties
                </button>
                <button className="flex items-center gap-2.5 pl-[7px]">
                    <Svg w={12} h={12}><Window x={2} y={0} /><path d="M.5 4.500h8v7h-8z" fill="#fff" stroke="#777" /><path d="M2 7h5M2 9h5" stroke="#3f7cb8" /></Svg>
                    Dictionary
                </button>
            </div>
            <StyleMenu />
        </aside>
    );
}

function StatusBar() {
    return (
        <footer className="flex h-[25px] shrink-0 items-center bg-[#2b579a] pt-0.5 text-[12px] whitespace-pre text-white">
            <span className="w-[71px] pl-2.5">Millimeters</span>
            <button aria-label="Units" className="ml-[10px]"><Svg w={6} h={3}><path d="M0 3l3-3 3 3z" fill="#fff" /></Svg></button>
            <span className="ml-[3px] h-[17px] w-px bg-[#a9bbd8]" />
            <Svg w={16} h={11}><path d="M10 0l6 5.500-6 5.500z" fill="#fff" /></Svg>
            <span className="ml-[10px] w-[82px]">Report Checker</span>
            <span className="ml-[7px] h-[17px] w-px bg-[#a9bbd8]" />
            <span className="ml-[7px] w-9">txtUnit</span>
            <span className="ml-[7px] h-[17px] w-px bg-[#a9bbd8]" />
            <span className="ml-[4px]">{"X:91,00  Y:0,00  Width:20,00  Height:6,00"}</span>
            <span className="flex-1" />
            <div className="flex w-[298px] items-center border-l border-[#6d8cbd] pl-[7px]">
                <Svg w={15} h={14}><path d="M.5 1.500h14v11H.5z" stroke="#fff" fill="#fff" /><path d="M2 7l3-3v6zM13 7l-3-3v6zM4 7h7M3 3.500h9M3 10.500h9" stroke="#3f7cb8" /></Svg>
                <span className="ml-[8px]"><Svg w={14} h={14}><path d="M0 0h14v14H0z" fill="#fff" /><path d="M7 1L4 5h6zM7 13l-3-4h6z" fill="#3f7cb8" /><path d="M1 7h12" stroke="#777" /></Svg></span>
                <span className="ml-[8px]"><Svg w={14} h={14}><path d="M0 0h14v14H0z" fill="#fff" /><path d="M3.500 1.500h7v11h-7zM5 4h4M5 6h4M5 8h4M5 10h4" stroke="#3f7cb8" /></Svg></span>
                <span className="ml-[8px]">
                    <Svg w={16} h={15}>
                        <path d="M1 0h9l4 4v8H1z" fill="#e8edf5" />
                        <path d="M3 3h6M3 5h8" stroke="#888" />
                        <path d="M3 8h13v7H3z" fill="#3f7cb8" />
                        <path d="M5.500 9.500v4M8 9.500h2v4H8zM12.500 9.500h2v4h-2z" stroke="#fff" />
                    </Svg>
                </span>
                <span className="ml-3">81%</span>
            </div>
        </footer>
    );
}

function TaskButton({ label, active, children }: { label: string; active?: boolean; children: ReactNode }) {
    return (
        <button
            aria-label={label}
            className={`flex h-[38px] items-center justify-center rounded-xs border border-[#d5d3e3] shadow-[0_0_0_1px_#3a3850] ${active ? "mr-[7px] w-[51px] bg-gradient-to-b from-[#f3f2f7] to-[#c7c6d6]" : "w-[58px] bg-gradient-to-b from-[#c1bfd3] via-[#a8a6c0] to-[#c0bed0]"}`}
        >
            {children}
        </button>
    );
}

function Taskbar() {
    return (
        <footer className="flex h-10 shrink-0 items-center border-t border-[#8a8798] bg-[linear-gradient(90deg,#0b090b_0,#0b090b_95px,#6b5f6c_115px,#51464f_124px,#1c181f_132px,#1c181f_145px,#777393_162px,#8d8ab0_245px,#8f8bb0_900px,#a8a0c0_960px,#8583ac_1110px,#77759b_1195px,#100e14_1218px,#060507_100%)] text-white">
            <div className="flex w-[245px] items-center pl-2">
                <button aria-label="Start">
                    <Svg w={38} h={38}>
                        <defs>
                            <radialGradient id="orb" cx=".5" cy=".85" r=".8">
                                <stop offset="0" stopColor="#45d8f4" />
                                <stop offset=".5" stopColor="#1f6fa3" />
                                <stop offset="1" stopColor="#9bb6c8" />
                            </radialGradient>
                        </defs>
                        <circle cx="19" cy="19" r="18" fill="url(#orb)" stroke="#4d6b80" />
                        <path d="M10 11c3-2 5-2 8 0l-1.500 7c-3-2-5-2-8 0z" fill="#e8592b" />
                        <path d="M20 11c3 2 5 2 9 0l-2 7c-3 2-5 2-8.500 0z" fill="#8fc33a" />
                        <path d="M8 20c3-2 5-2 8 0l-1.500 7c-3-2-5-2-8 0z" fill="#4aa3e0" />
                        <path d="M18 20c3 2 5 2 8.500 0l-2 7c-3 2-5 2-8.500 0z" fill="#fbc52c" />
                    </Svg>
                </button>
                <button aria-label="Internet Explorer" className="ml-7">
                    <Svg w={30} h={32}>
                        <path d="M27 19H10c1 6 8 7 10 3h6c-2 6-7 8-11 8C8 30 3 25 3 18S8 6 15 6s12 5 12 13zM10 15h10c-1-5-9-5-10 0z" fill="#5cc6f2" />
                        <path d="M3 29C-3 23 11 4 24 2c5-1 5 3 3 8M3 29c2 2 6 1 9-1" stroke="#f5c518" strokeWidth="2.500" />
                    </Svg>
                </button>
                <button aria-label="Media Player" className="ml-[33px]">
                    <Svg w={27} h={27}>
                        <path d="M4 2h22v20H4z" fill="#63a9d6" />
                        <path d="M0 1h21v24H0z" fill="#a6d0ea" stroke="#4b8fc0" />
                        <circle cx="11" cy="13" r="9" fill="#f47b20" />
                        <path d="M8 7l9 6-9 6z" fill="#fff" />
                    </Svg>
                </button>
                <button aria-label="Explorer" className="ml-[32px]">
                    <Svg w={34} h={30}>
                        <path d="M1 2h12l2 3h16v22H1z" fill="#e8cf7e" />
                        <path d="M5 1h8v3H5z" fill="#38b54a" />
                        <path d="M13 4h9v3h-9z" fill="#e45" />
                        <path d="M22 6h8v3h-8z" fill="#4aa3e0" />
                        <path d="M1 10h31v17H1z" fill="#f6e7a9" />
                        <path d="M7 29V19h20v10h-5v-5H12v5z" fill="#8ccfe8" />
                    </Svg>
                </button>
            </div>
            <div className="flex items-center gap-1">
                <TaskButton label="Thunderbird">
                    <Svg w={34} h={34}>
                        <circle cx="17" cy="17" r="15" fill="#2a66b8" />
                        <path d="M3 12C7 2 22-2 31 8c3 8 2 15-4 20 3-9-1-16-9-17-6-3-10-2-15 1z" fill="#4d9be0" />
                        <path d="M5 14l17-2 5 12-16 4z" fill="#f4f4f4" />
                        <path d="M5 14l12 6 5-8" stroke="#bbb" />
                        <path d="M3 19c0 8 7 13 14 13-5-2-6-5-6-8z" fill="#231f4a" />
                    </Svg>
                </TaskButton>
                <TaskButton label="Chrome">
                    <Svg w={30} h={30}>
                        <circle cx="15" cy="15" r="15" fill="#fbc52c" />
                        <path d="M2 7.500A15 15 0 0128 7.500H15l-6 11z" fill="#db4437" />
                        <path d="M2 7.500A15 15 0 0015 30l6-11-12-.5z" fill="#1da15a" />
                        <circle cx="15" cy="15" r="6.500" fill="#4285f4" stroke="#fff" strokeWidth="2" />
                    </Svg>
                </TaskButton>
                <TaskButton label="Firefox">
                    <Svg w={32} h={32}>
                        <circle cx="16" cy="17" r="13" fill="#ff7a18" />
                        <path d="M3 8c-3 9 0 19 10 22 8 2 15-3 16-10-4 6-12 7-17 3C7 20 7 13 3 8z" fill="#ee3a52" />
                        <circle cx="16" cy="15" r="8" fill="#3b4fc4" />
                        <path d="M3 7c2 3 6 3 10 4-2 2-2 4 2 5-1 3-4 3-5 2 2 6 9 6 12 2-2 7-12 8-16 2C3 18 2 12 3 7z" fill="#ff8a1e" />
                        <path d="M21 1c5 4 10 9 9 17-1 6-4 8-8 9 3-4 3-9 1-13s-4-8-2-13z" fill="#ffd43a" />
                    </Svg>
                </TaskButton>
                <TaskButton label="Skype">
                    <span className="relative">
                        <Svg w={32} h={32}>
                            <circle cx="10" cy="9" r="9" fill="#0a88c8" />
                            <circle cx="17" cy="17" r="14" fill="#12a9e8" />
                            <path d="M22 12c-2-4-10-4-10 0 0 5 10 4 10 9 0 4-9 4-11 0" stroke="#fff" strokeWidth="3.500" />
                        </Svg>
                        <span className="absolute -right-1 -bottom-px flex size-[15px] items-center justify-center rounded-full bg-[#f0443c] text-[10px]">6</span>
                    </span>
                </TaskButton>
                <TaskButton label="Notes">
                    <Svg w={34} h={28}>
                        <path d="M5 3l16 4-4 13-15-4z" fill="#a8dca0" />
                        <path d="M9 7h16v16H9z" fill="#a9d4f5" />
                        <path d="M12 9l17-4 4 15-16 5z" fill="#f8e06a" />
                    </Svg>
                </TaskButton>
                <TaskButton label="Report tool" active>
                    <Svg w={32} h={32}>
                        <defs>
                            <clipPath id="disc"><circle cx="16" cy="16" r="16" /></clipPath>
                        </defs>
                        <g clipPath="url(#disc)">
                            <path d="M0 0h18c-4 4-4 8-4 12C9 11 4 12 0 17z" fill="#1484c8" />
                            <path d="M16 0h16v18c-3-1-8-1-12-4-6-3-8-9-4-14z" fill="#20a06a" />
                            <path d="M32 14v18H14c4-5 6-9 5-14 5 1 10 0 13-4z" fill="#d8202a" />
                            <path d="M0 15c4-3 9-5 13-2-1 6 2 9 6 11-2 4-4 6-7 8H0z" fill="#f7a823" />
                        </g>
                        <circle cx="16" cy="15" r="5.500" fill="#fff" />
                    </Svg>
                </TaskButton>
                <TaskButton label="MISA">
                    <Svg w={32} h={32}>
                        <circle cx="16" cy="16" r="15" fill="#cf3a35" stroke="#e9c3c1" />
                        <circle cx="16" cy="16" r="12.500" stroke="#fff" />
                        <path d="M6 16l5-6 10 12 5-6-5-6-10 12z" stroke="#fff" strokeWidth="3" />
                    </Svg>
                </TaskButton>
                <TaskButton label="Palm">
                    <Svg w={32} h={32}>
                        <circle cx="16" cy="16" r="15" fill="#0c8f12" stroke="#d5e8d3" />
                        <circle cx="16" cy="16" r="12.500" stroke="#fff" />
                        <path d="M16 10C11 6 6 10 5 15l6-3-5 9 8-8-3 11 5-9 2 10 1-10 5 8-2-10 6 6c-1-7-6-11-12-9z" fill="#fff" />
                    </Svg>
                </TaskButton>
                <TaskButton label="Spreadsheet">
                    <Svg w={28} h={32}>
                        <path d="M2 1.500h13l10 10v19H2z" fill="#fff" stroke="#1f9b12" strokeWidth="3" />
                        <path d="M17 0h10v9z" fill="#1f7f12" />
                        <path d="M6 13.500h14v11H6zM6 17h14M6 21h14M10.500 13v12M15.500 13v12" stroke="#1f9b12" strokeWidth="1.500" />
                        <path d="M14 19h7v7h-7z" fill="#fff" stroke="#888" />
                        <path d="M16 22v4M18 23v3" stroke="#27c" /><path d="M19.500 20v6" stroke="#e62" />
                    </Svg>
                </TaskButton>
            </div>
            <span className="flex-1" />
            <div className="flex h-full items-center text-[12px]">
                <span className="mb-[5px]">EN</span>
                <Svg w={45} h={5}><path d="M21 5l3.500-5L28 5z" fill="#fff" /></Svg>
                <Svg w={16} h={14}><path d="M1.500 0v14" stroke="#fff" strokeWidth="1.500" /><path d="M3 2c3-2 4 1 6 0v6C6 9 5 7 3 8zM9 4h6l-2 3-4 1z" fill="#fff" /></Svg>
                <span className="ml-[9px]"><Svg w={16} h={14}><path d="M5.500 2.500h9v7h-9zM10 10v3M7 13h7M2 0v6M0 2h4v3H0zM2 6v6h4" stroke="#fff" /></Svg></span>
                <span className="ml-[8px]"><Svg w={16} h={14}><path d="M0 5h3l4-4v12l-4-4H0z" fill="#fff" /><path d="M9 5c1 1 1 3 0 4M11 3c2 2 2 6 0 8M13 1c3 3 3 9 0 12" stroke="#fff" /></Svg></span>
                <div className="ml-[13px] w-[56px] text-center text-[12px] leading-[17px]">
                    <p>9:07 AM</p>
                    <p>04/05/20</p>
                </div>
                <button aria-label="Show desktop" className="ml-[9px] h-[38px] w-3.5 border border-[#666] bg-gradient-to-b from-[#555] to-black" />
            </div>
        </footer>
    );
}

function Annotations() {
    return (
        <svg className="pointer-events-none absolute top-0 left-0 z-30 overflow-visible" width="1366" height="768" fill="none" stroke="#ed1c24" strokeWidth="5" aria-hidden="true">
            <path d="M387.500 453.500h84v38h-84zM1048.500 403.500h152v24h-152zM1156.500 425.500h186v20h-186z" />
            <path d="M480 482l557-66M1003 392l34 24-9 36" strokeLinecap="round" />
        </svg>
    );
}

export default function App() {
    return (
        <div className={`relative flex h-screen w-full flex-col overflow-hidden bg-white ${UI}`}>
            <TitleBar />
            <TabBar />
            <Ribbon />
            <div className="flex min-h-0 flex-1">
                <Toolbox />
                <Document />
                <PropertiesPanel />
            </div>
            <StatusBar />
            <Taskbar />
            <Annotations />
        </div>
    );
}
